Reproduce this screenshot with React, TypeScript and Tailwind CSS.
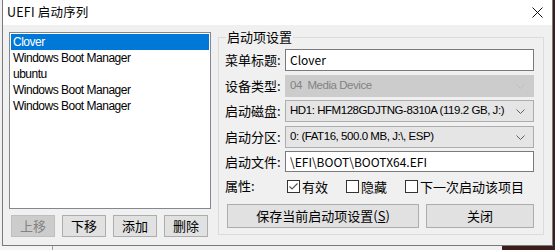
import React from "react";

const F = { fontFamily: '"Noto Sans CJK SC", "Noto Sans", sans-serif' };
const L = { fontFamily: '"Liberation Sans", Arial, sans-serif' };

function Chevron({ color }: { color: string }) {
  return (
    <svg width="9" height="5" viewBox="0 0 9 5" className="shrink-0">
      <path d="M0.5 0.5 L4.5 4.5 L8.5 0.5" fill="none" stroke={color} strokeWidth="1" />
    </svg>
  );
}

function Combo({ text, disabled }: { text: string; disabled?: boolean }) {
  return (
    <div
      className={
        "w-[249px] h-[22px] flex items-center justify-between pl-[4px] pr-[8px] border overflow-hidden " +
        (disabled
          ? "bg-[#cccccc] border-[#cccccc] text-[#838383]"
          : "bg-[#e5e5e5] border-[#adadad] text-black")
      }
    >
      <span className="whitespace-pre leading-none text-[11.5px] tracking-[-0.45px]" style={L}>{text}</span>
      <Chevron color={disabled ? "#bfbfbf" : "#606060"} />
    </div>
  );
}

function Check({ checked, label }: { checked?: boolean; label: string }) {
  return (
    <div className="flex items-center">
      <div className="w-[13px] h-[13px] border border-[#333333] bg-white flex items-center justify-center">
        {checked && (
          <svg width="11" height="11" viewBox="0 0 11 11">
            <path d="M1.5 5.5 L4 8 L9.5 2.5" fill="none" stroke="#555555" strokeWidth="1.2" />
          </svg>
        )}
      </div>
      <span className="ml-[2px] leading-none">{label}</span>
    </div>
  );
}

export default function App() {
  const items = [
    "Clover",
    "Windows Boot Manager",
    "ubuntu",
    "Windows Boot Manager",
    "Windows Boot Manager",
  ];
  return (
    <div className="w-[555px] h-[250px] overflow-hidden bg-[#f0f0f0] flex flex-col text-[12px] text-black" style={F}>
      <div className="flex h-[246px]">
        <div className="w-[2px] bg-[#f0f0f0]" />
        <div className="w-[551px] h-[246px] border-l border-r border-b border-[#7a7a7a] flex flex-col">
          {/* title bar */}
          <div className="h-[25px] bg-white flex items-center justify-between pl-[4px] pr-[9px]">
            <span className="text-[12.5px] leading-none tracking-[0.2px]">UEFI 启动序列</span>
            <svg width="11" height="11" viewBox="0 0 11 11">
              <path d="M0.5 0.5 L10.5 10.5 M10.5 0.5 L0.5 10.5" stroke="#111111" strokeWidth="1" />
            </svg>
          </div>
          {/* body */}
          <div className="flex-1 bg-[#f0f0f0] flex pt-[7px] pl-[6px]">
            {/* left column */}
            <div className="w-[202px] flex flex-col">
              <div className="h-[177px] border border-[#828790] bg-white p-[1px]">
                {items.map((it, i) => (
                  <div
                    key={i}
                    style={L}
                    className={
                      "h-[16px] flex items-center pl-[2px] leading-none text-[12px] tracking-[-0.5px] " +
                      (i === 0 ? "bg-[#0078d7] text-white" : "text-black")
                    }
                  >
                    {it}
                  </div>
                ))}
              </div>
              <div className="flex gap-[7px] mt-[6px] pl-[2px]">
                <div className="w-[44px] h-[22px] border border-[#bfbfbf] bg-[#cccccc] text-[#838383] flex items-center justify-center text-[13px]">
                  上移
                </div>
                {["下移", "添加", "删除"].map((b) => (
                  <div
                    key={b}
                    className="w-[44px] h-[22px] border border-[#adadad] bg-[#e1e1e1] flex items-center justify-center text-[13px]"
                  >
                    {b}
                  </div>
                ))}
              </div>
            </div>
            {/* group box */}
            <div className="ml-[7px] mt-[5px] w-[326px] h-[198px] border border-[#dcdcdc] relative pl-[6px] pt-[11px]">
              <span className="absolute left-[7px] top-[-9px] bg-[#f0f0f0] px-[1px] text-[13px] leading-[16px]">
                启动项设置
              </span>
              <div className="flex items-center h-[22px] text-[13px]">
                <span className="w-[60px]">菜单标题:</span>
                <div className="w-[249px] h-[22px] border border-[#7a7a7a] bg-white flex items-center pl-[4px] text-[12px]">
                  Clover
                </div>
              </div>
              <div className="flex items-center h-[22px] mt-[4px] text-[13px]">
                <span className="w-[60px]">设备类型:</span>
                <Combo text="04  Media Device" disabled />
              </div>
              <div className="flex items-center h-[22px] mt-[3px] text-[13px]">
                <span className="w-[60px]">启动磁盘:</span>
                <Combo text="HD1: HFM128GDJTNG-8310A (119.2 GB, J:)" />
              </div>
              <div className="flex items-center h-[22px] mt-[4px] text-[13px]">
                <span className="w-[60px]">启动分区:</span>
                <Combo text="0: (FAT16, 500.0 MB, J:\, ESP)" />
              </div>
              <div className="flex items-center h-[21px] mt-[3px] text-[13px]">
                <span className="w-[60px]">启动文件:</span>
                <div className="w-[249px] h-[21px] border border-[#7a7a7a] bg-white flex items-center pl-[4px] text-[12px]">
                  \EFI\BOOT\BOOTX64.EFI
                </div>
              </div>
              <div className="flex items-center h-[16px] mt-[6px] text-[13px]">
                <span className="w-[62px]">属性:</span>
                <div className="flex items-center gap-[18px]">
                  <Check checked label="有效" />
                  <Check label="隐藏" />
                  <Check label="下一次启动该项目" />
                </div>
              </div>
              <div className="flex gap-[7px] mt-[10px] ml-[2px]">
                <div className="w-[192px] h-[24px] border border-[#adadad] bg-[#e1e1e1] flex items-center justify-center text-[13px]">
                  保存当前启动项设置(<span className="underline">S</span>)
                </div>
                <div className="w-[108px] h-[24px] border border-[#adadad] bg-[#e1e1e1] flex items-center justify-center text-[13px]">
                  关闭
                </div>
              </div>
            </div>
          </div>
        </div>
        <div className="flex-1 bg-[#3a1e1e]" />
      </div>
      <div className="flex-1 flex">
        <div className="w-[52px] bg-[#f4f4f4]" />
        <div className="w-[450px] border-l border-[#a0a0a0] bg-[#f0f0f0]" />
        <div className="flex-1 bg-[#3a1e1e]" />
      </div>
    </div>
  );
}
